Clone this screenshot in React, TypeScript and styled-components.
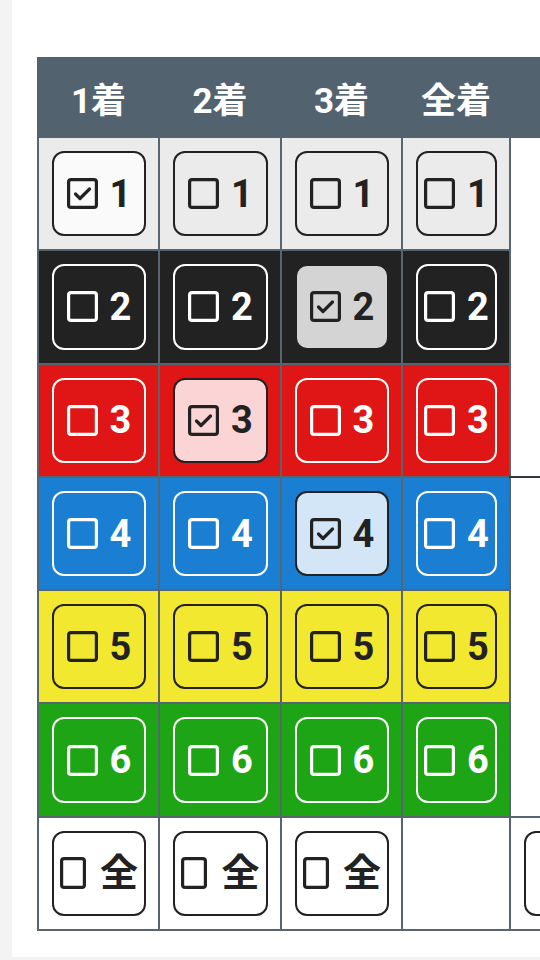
import React from "react";
import styled, { createGlobalStyle } from "styled-components";

const GlobalStyle = createGlobalStyle`
  html, body { margin: 0; padding: 0; background: #f3f3f3; overflow: hidden; }
  body { font-family: Roboto, "Noto Sans CJK JP", sans-serif; }
`;

const Page = styled.div`
  margin-left: 12px;
  height: 957px;
  background: #ffffff;
  padding: 57px 0 0 25px;
  box-sizing: border-box;
  overflow: hidden;
`;

const GRID = "#56656f";

const Table = styled.table`
  border-collapse: collapse;
  table-layout: fixed;
  width: 622px;
`;

const HeadCell = styled.th`
  background: #52636f;
  color: #ffffff;
  height: 77px;
  padding: 0;
  font-size: 35px;
  font-weight: 700;
  text-align: center;
  border: 2px solid #52636f;
`;

const Cell = styled.td<{ $bg: string }>`
  background: ${(p) => p.$bg};
  border: 2px solid ${GRID};
  padding: 13px 12px 13px 13px;
  vertical-align: middle;
`;

const SideCell = styled.td<{ $dark?: boolean }>`
  background: #ffffff;
  border-left: 2px solid ${GRID};
  border-top: 0;
  border-right: 0;
  border-bottom: 2px solid ${(p) => (p.$dark ? "#2c3741" : GRID)};
  padding: 0;
`;

const Toggle = styled.button<{ $bg: string; $fg: string; $on: boolean; $onBg: string; $gap?: number }>`
  display: flex;
  align-items: center;
  justify-content: center;
  gap: ${(p) => p.$gap ?? 12}px;
  width: 100%;
  height: 85.3px;
  box-sizing: border-box;
  padding: 0 2px;
  border-radius: 12px;
  border: 2px solid ${(p) => (p.$on ? "#222222" : p.$fg)};
  background: ${(p) => (p.$on ? p.$onBg : p.$bg)};
  color: ${(p) => (p.$on ? "#222222" : p.$fg)};
  font-family: Roboto, "Noto Sans CJK JP", sans-serif;
  font-size: 38px;
  font-weight: 700;
  cursor: pointer;
  white-space: nowrap;
`;

const Label = styled.span`
  line-height: 1;
`;

const BoxIcon = styled.svg`
  flex: none;
  display: block;
`;

function CheckMark({ on, w = 31, h = 31 }: { on: boolean; w?: number; h?: number }) {
  return (
    <BoxIcon width={w} height={h} viewBox={`0 0 ${w} ${h}`} fill="none" stroke="currentColor" aria-hidden="true">
      <rect x={1.6} y={1.6} width={w - 3.2} height={h - 3.2} rx={2.5} strokeWidth={3.2} />
      {on && (
        <path d="M8.5 16 L13 20.5 L22.5 11" strokeWidth={3.2} strokeLinecap="round" strokeLinejoin="round" />
      )}
    </BoxIcon>
  );
}

type Row = { n: string; bg: string; fg: string; onBg: string; checked: number[] };

const rows: Row[] = [
  { n: "1", bg: "#ebebeb", fg: "#222222", onBg: "#fafafa", checked: [0] },
  { n: "2", bg: "#222222", fg: "#ffffff", onBg: "#d4d4d4", checked: [2] },
  { n: "3", bg: "#e01515", fg: "#ffffff", onBg: "#fbd5d5", checked: [1] },
  { n: "4", bg: "#1a7fd2", fg: "#ffffff", onBg: "#d3e6f7", checked: [2] },
  { n: "5", bg: "#f2e82f", fg: "#222222", onBg: "#fbf6c0", checked: [] },
  { n: "6", bg: "#1ea516", fg: "#ffffff", onBg: "#d0edcd", checked: [] },
];

const heads = ["1着", "2着", "3着", "全着", ""];
const widths = [121, 122, 121, 108, 150];

export default function App() {
  return (
    <>
      <GlobalStyle />
      <Page>
        <Table>
          <colgroup>
            {widths.map((w, i) => (
              <col key={i} style={{ width: w }} />
            ))}
          </colgroup>
          <thead>
            <tr>
              {heads.map((h, i) => (
                <HeadCell key={i}>{h}</HeadCell>
              ))}
            </tr>
          </thead>
          <tbody>
            {rows.map((r, ri) => (
              <tr key={r.n}>
                {[0, 1, 2, 3].map((c) => {
                  const on = r.checked.includes(c);
                  return (
                    <Cell key={c} $bg={r.bg}>
                      <Toggle $bg={r.bg} $fg={r.fg} $on={on} $onBg={r.onBg}>
                        <CheckMark on={on} />
                        <Label>{r.n}</Label>
                      </Toggle>
                    </Cell>
                  );
                })}
                {ri % 3 === 0 && <SideCell rowSpan={3} $dark={ri === 0} />}
              </tr>
            ))}
            <tr>
              {[0, 1, 2].map((c) => (
                <Cell key={c} $bg="#ffffff">
                  <Toggle $bg="#ffffff" $fg="#222222" $on={false} $onBg="#ffffff" $gap={14}>
                    <CheckMark on={false} w={26} h={32} />
                    <Label>全</Label>
                  </Toggle>
                </Cell>
              ))}
              <Cell $bg="#ffffff" />
              <Cell $bg="#ffffff">
                <Toggle $bg="#ffffff" $fg="#222222" $on={false} $onBg="#ffffff">
                  <Label>選択</Label>
                </Toggle>
              </Cell>
            </tr>
          </tbody>
        </Table>
      </Page>
    </>
  );
}
